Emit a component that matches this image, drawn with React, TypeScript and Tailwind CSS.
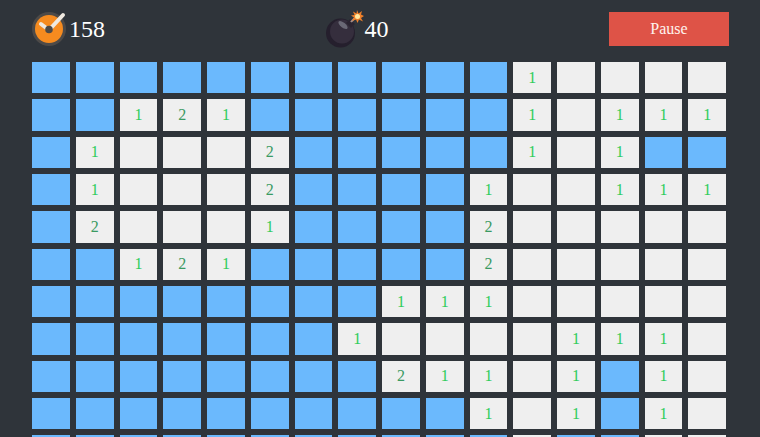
import React from "react";

// "#" is a covered cell, "." an open empty one, a digit counts the mines around it.
const board = [
  "###########1....",
  "##121######1.111",
  "#1...2#####1.1##",
  "#1...2####1..111",
  "#2...1####2.....",
  "##121#####2.....",
  "########111.....",
  "#######1....111.",
  "########211.1#1.",
  "##########1.1#1.",
  "###########.##..",
];

function Clock() {
  return (
    <svg viewBox="0 0 36 36" className="size-9" aria-hidden="true">
      <circle cx="17" cy="18" r="17" fill="#4d4a48" />
      <circle cx="17" cy="18" r="14" fill="#f68b1f" />
      <path d="M9 13 L17 19 L31 4" fill="none" stroke="#efe9e0" strokeWidth="4" strokeLinecap="round" />
      <circle cx="17" cy="18.5" r="3.8" fill="#4d4a48" />
    </svg>
  );
}

function Bomb() {
  return (
    <svg viewBox="0 0 38 38" className="size-[38px]" aria-hidden="true">
      <circle cx="14.500" cy="23" r="14.500" fill="#251f2d" />
      <circle cx="16" cy="21.500" r="12" fill="#352e3d" />
      <path d="M20 13 L24 9 L29 14 L25 18 Z" fill="#2a2431" />
      <path d="M25 12 Q27 9 31 7" fill="none" stroke="#a58f8b" strokeWidth="2" />
      <ellipse cx="17" cy="15" rx="5.500" ry="2.500" transform="rotate(38 17 15)" fill="#6a6976" />
      <path d="M31 0 L32.500 3.500 L36 1 L35 4.500 L38 6 L35 8 L37 11.500 L33 9.500 L31.500 13 L30 9.500 L26 11 L28 7.500 L25 5.500 L28.500 5 L27 1.500 L30.500 3.500 Z" fill="#f0802a" />
      <circle cx="31.500" cy="6.500" r="2.500" fill="#ffe9a0" />
    </svg>
  );
}

function Cell({ value }: { value: string }) {
  const look =
    value === "#" ? "bg-[#6bb9fd]" : value === "1" ? "bg-[#efefef] text-[#2ecc5b]" : "bg-[#efefef] text-[#3a9a62]";
  const digit = value === "#" || value === "." ? "" : value;
  return (
    <button
      type="button"
      aria-label={value === "#" ? "Covered cell" : digit || "Empty cell"}
      className={`flex aspect-[100/83] items-center justify-center text-base leading-5 ${look}`}
    >
      {digit}
    </button>
  );
}

export default function App() {
  return (
    <main className="h-screen overflow-hidden bg-[#2f343a] pr-[34px] pl-8 font-['Liberation_Serif',serif]">
      <header className="-mr-[3px] flex h-[62px] items-center justify-between pb-1">
        <div className="flex items-center gap-px text-2xl text-white">
          <Clock />
          <span>158</span>
        </div>
        <div className="flex items-center gap-px text-2xl text-white">
          <Bomb />
          <span>40</span>
        </div>
        <button type="button" className="h-[34px] w-[120px] bg-[#de5347] text-base text-[#fff3ee]">
          Pause
        </button>
      </header>
      <section aria-label="Minefield" className="grid grid-cols-16 gap-1.5">
        {board.flatMap((row, y) => row.split("").map((value, x) => <Cell key={`${y}-${x}`} value={value} />))}
      </section>
    </main>
  );
}
